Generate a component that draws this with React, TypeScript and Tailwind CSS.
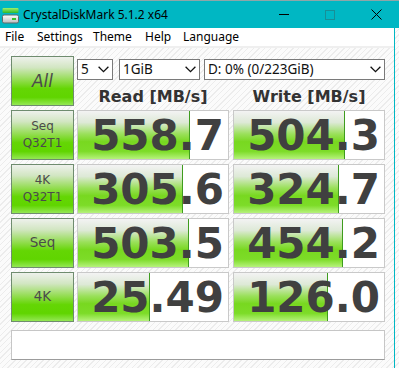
import React from "react";

const rows = [
  { l1: "Seq", l2: "Q32T1", r: "558.7", rw: 112, w: "504.3", ww: 111 },
  { l1: "4K", l2: "Q32T1", r: "305.6", rw: 105, w: "324.7", ww: 105 },
  { l1: "Seq", l2: "", r: "503.5", rw: 111, w: "454.2", ww: 109 },
  { l1: "4K", l2: "", r: "25.49", rw: 72, w: "126.0", ww: 94 },
];

const ui = { fontFamily: '"Noto Sans", "Open Sans", sans-serif' };
const dv = { fontFamily: '"DejaVu Sans", Verdana, sans-serif' };

function Chevron() {
  return (
    <svg width="11" height="7" viewBox="0 0 11 7">
      <path d="M0.6 0.8 L5.5 5.7 L10.4 0.8" stroke="#111" strokeWidth="1.3" fill="none" />
    </svg>
  );
}

function Select({ w, text, ml }: { w: string; text: string; ml: string }) {
  return (
    <div className={`${w} ${ml} h-[21px] bg-white border border-[#7a7a7a] flex items-center justify-between pl-[3px] pr-[3px] text-[13.5px] text-[#111]`} style={ui}>
      <span className="leading-none">{text}</span>
      <Chevron />
    </div>
  );
}

function Label({ a, b, big }: { a: string; b?: string; big?: boolean }) {
  return (
    <div
      className="w-[63px] h-[50px] shrink-0 border border-[#6f8c6f] bg-[linear-gradient(to_bottom,#eef1ec_0%,#d2e6c2_22%,#8edc48_50%,#64d604_66%,#60d500_84%,#94e854_100%)] flex flex-col items-center justify-center text-[#4b4b4b]"
      style={dv}
    >
      {big ? (
        <span className="text-[17px] italic leading-none">{a}</span>
      ) : b ? (
        <>
          <span className="text-[12px] leading-[17px]">{a}</span>
          <span className="text-[12px] leading-[17px]">{b}</span>
        </>
      ) : (
        <span className="text-[13.5px] leading-none">{a}</span>
      )}
    </div>
  );
}

function Value({ v, bw, ml }: { v: string; bw: number; ml: string }) {
  return (
    <div className={`relative w-[152px] h-[50px] ${ml} shrink-0 border border-[#c9c9c9] bg-white flex items-center justify-end pr-[4px]`}>
      <div
        className="absolute left-0 top-0 bottom-0 border-r border-[#3e9c1e] bg-[linear-gradient(to_bottom,#f3f3f3_0%,#dde9d6_24%,#9ae05a_48%,#78d820_64%,#7ddc28_84%,#b6f27c_100%)]"
        style={{ width: bw }}
      />
      <span className="relative text-[42px] font-bold leading-none text-[#404040] pt-[1px]" style={dv}>
        {v}
      </span>
    </div>
  );
}

export default function App() {
  return (
    <div className="w-[399px] h-[368px] overflow-hidden bg-[#f6f6f6]">
      {/* title bar */}
      <div className="h-[28px] bg-[#00b7c3] border-t border-[#8fa6a8] flex items-center">
        <svg width="18" height="18" viewBox="0 0 18 18" className="ml-[2px] mt-[2px]">
          <defs>
            <linearGradient id="g1" x1="0" y1="0" x2="0" y2="1">
              <stop offset="0" stopColor="#9bf06a" />
              <stop offset="1" stopColor="#2fb82a" />
            </linearGradient>
            <linearGradient id="g2" x1="0" y1="0" x2="0" y2="1">
              <stop offset="0" stopColor="#ffffff" />
              <stop offset="1" stopColor="#b9bcbc" />
            </linearGradient>
          </defs>
          <rect x="0.5" y="1" width="16" height="5" rx="1" fill="url(#g1)" />
          <rect x="0.5" y="8" width="16" height="8" rx="1.5" fill="url(#g2)" stroke="#5f6a6a" strokeWidth="1" />
          <rect x="10" y="11" width="4" height="2" fill="#35c22c" />
        </svg>
        <span className="ml-[3px] text-[12px] text-black leading-none" style={ui}>
          CrystalDiskMark 5.1.2 x64
        </span>
        <div className="flex-1" />
        <div className="w-[46px] h-full flex items-center justify-center">
          <div className="w-[10px] h-px bg-black" />
        </div>
        <div className="w-[46px] h-full flex items-center justify-center">
          <div className="w-[10px] h-[10px] border border-[#178f97]" />
        </div>
        <div className="w-[46px] h-full flex items-center justify-center">
          <svg width="11" height="11" viewBox="0 0 11 11">
            <path d="M0.5 0.5 L10.5 10.5 M10.5 0.5 L0.5 10.5" stroke="#000" strokeWidth="1" />
          </svg>
        </div>
      </div>

      <div className="flex h-[340px]">
        <div className="w-[394px] flex flex-col">
          {/* menu */}
          <div className="h-[18px] bg-white flex items-center pl-[5px] text-[12px] text-black" style={ui}>
            <span className="w-[32px]">File</span>
            <span className="w-[56px]">Settings</span>
            <span className="w-[52px]">Theme</span>
            <span className="w-[38px]">Help</span>
            <span>Language</span>
          </div>
          <div className="h-[2px] bg-[#efefef]" />
          {/* client */}
          <div className="flex-1 bg-[repeating-linear-gradient(135deg,#fbfbfb_0px,#fbfbfb_3px,#ececec_3px,#ececec_4px)] pl-[11px] pt-[8px]">
            <div className="flex">
              <Label a="All" big />
              <div className="ml-[3px] flex flex-col">
                <div className="flex mt-[3px]">
                  <Select w="w-[36px]" text="5" ml="" />
                  <Select w="w-[81px]" text="1GiB" ml="ml-[6px]" />
                  <Select w="w-[181px]" text="D: 0% (0/223GiB)" ml="ml-[4px]" />
                </div>
                <div className="flex mt-[7px] text-[16px] font-bold text-[#333] leading-[19px]" style={dv}>
                  <div className="w-[152px] text-center">Read [MB/s]</div>
                  <div className="w-[152px] ml-[4px] text-center">Write [MB/s]</div>
                </div>
              </div>
            </div>
            {rows.map((r, i) => (
              <div key={i} className="flex mt-[4px]">
                <Label a={r.l1} b={r.l2} />
                <Value v={r.r} bw={r.rw} ml="ml-[3px]" />
                <Value v={r.w} bw={r.ww} ml="ml-[4px]" />
              </div>
            ))}
            <div className="mt-[8px] w-[374px] h-[30px] bg-white border border-[#c6c6c6] border-b-[#9c9c9c]" />
          </div>
        </div>
        <div className="w-px bg-[#00b7c3]" />
        <div className="flex-1 bg-[repeating-linear-gradient(135deg,#fbfbfb_0px,#fbfbfb_3px,#ececec_3px,#ececec_4px)]" />
      </div>
    </div>
  );
}
